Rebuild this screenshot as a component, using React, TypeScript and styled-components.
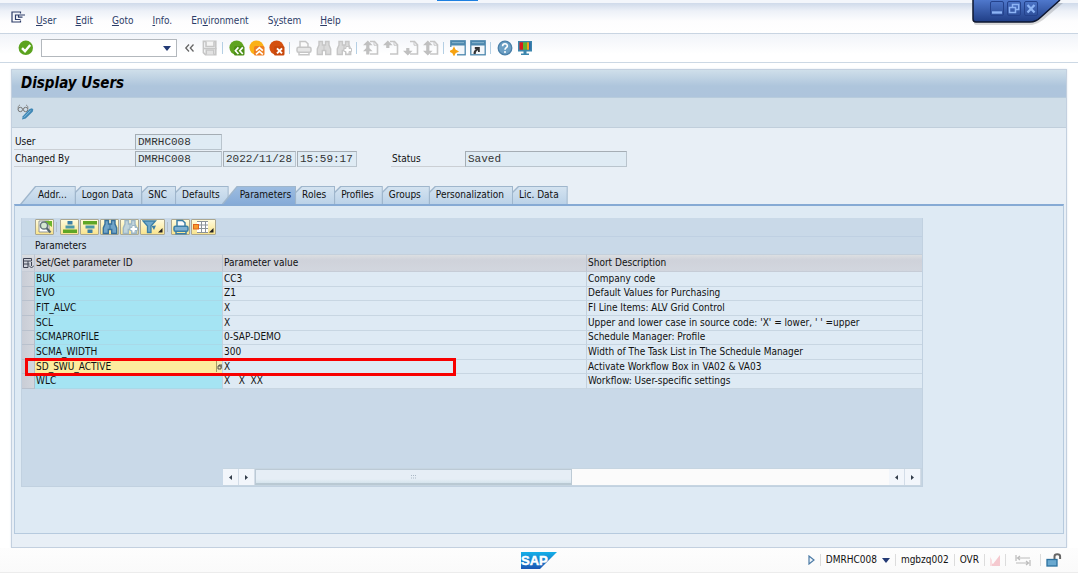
import React from "react";
import styled, { createGlobalStyle, css } from "styled-components";

const GlobalStyle = createGlobalStyle`
  * { box-sizing: border-box; }
  body { margin: 0; background: #fff; }
  body, button, input, table {
    font-family: "DejaVu Sans Condensed", "DejaVu Sans", sans-serif;
    font-size: 10px;
    line-height: 12px;
    color: #111;
  }
  button { padding: 0; border: 0; background: none; }
  svg { display: block; }
`;

const Page = styled.div`
  display: flex;
  flex-direction: column;
  min-height: 100vh;
  padding: 0 2px 2px 0;
`;

const TopStrip = styled.div`
  height: 3px;
  background: #f3f6fb;
  display: flex;
  justify-content: center;
  padding-right: 163px;
`;

const ActiveMark = styled.div`
  width: 41px;
  height: 1px;
  background: #1d7fe0;
`;

const MenuBar = styled.nav`
  display: flex;
  align-items: center;
  gap: 19px;
  height: 31px;
  padding: 6px 0 0 11px;
  background: linear-gradient(#cfdaea, #edf1f8 8px, #fdfdfe 18px, #fff);
  border-bottom: 1px solid #c9d5e2;
`;

const MenuIcon = styled.button`
  margin: 0 -9px 8px 0;
`;

const MenuItem = styled.button`
  color: #2c3c68;
  u { text-underline-offset: 1px; }
`;

const WindowTab = styled.div`
  position: absolute;
  top: 0;
  right: 16px;
  width: 92px;
  height: 27px;
`;

const WindowShape = styled.svg`
  position: absolute;
  inset: 0;
`;

const WindowButtons = styled.div`
  position: relative;
  display: flex;
  gap: 3px;
  padding: 1px 0 0 18px;
`;

const WindowButton = styled.button`
  width: 14px;
  height: 15px;
  border: 1px solid #24428c;
  border-radius: 2px;
`;

const Toolbar = styled.div`
  display: flex;
  align-items: center;
  gap: 4px;
  height: 29px;
  padding-left: 18px;
  background: linear-gradient(#f1f4f9, #fff 20px);
  border-bottom: 1px solid #ccd8e4;
`;

const ToolButton = styled.button`
  width: 16px;
  height: 16px;
`;

const Divider = styled.span`
  width: 1px;
  height: 12px;
  margin-right: 2px;
  background: #b4cfe4;
`;

const CommandBox = styled.div`
  display: flex;
  width: 136px;
  height: 18px;
  margin-left: 3px;
  border: 1px solid #b3b8bd;
  background: #fff;
  margin-right: 1px;
`;

const CommandInput = styled.input`
  flex: 1;
  min-width: 0;
  border: 0;
  padding: 0 3px;
  background: none;
  outline: 0;
`;

const CommandArrow = styled.button`
  width: 18px;
  display: grid;
  place-items: center;
`;

const Screen = styled.main`
  flex: 1;
  display: flex;
  flex-direction: column;
  margin: 6px 11px 0;
  background: #e8eff6;
  border: 1px solid #c3d0df;
  box-shadow: 0 0 2px #dfe6ef;
`;

const Title = styled.h1`
  margin: 0;
  height: 28px;
  padding-left: 9px;
  background: linear-gradient(#cfdfea, #aec5dc 16px, #aec4dc);
  border-bottom: 1px solid #b7cbdc;
  font-size: 15px;
  line-height: 27px;
  font-weight: bold;
  font-style: italic;
  color: #000;
`;

const AppToolbar = styled.div`
  height: 30px;
  padding: 6px 0 0 5px;
  background: #cfdde8;
  border-bottom: 1px solid #c0cedb;
`;

const Form = styled.div`
  display: grid;
  grid-template-columns: 120px 87px 73px 60px 32px 73px 162px;
  grid-template-rows: 16px 16px;
  row-gap: 1px;
  column-gap: 1px;
  padding: 6px 0 0 2px;
`;

const FieldLabel = styled.label<{ $column?: number }>`
  ${(p) => p.$column && css`grid-column: ${p.$column};`}
  margin-right: -1px;
  padding: 2px 0 0 1px;
  border-bottom: 1px solid #cbcfd4;
`;

const Field = styled.input`
  min-width: 0;
  height: 16px;
  padding: 0 2px;
  border: 1px solid #b9c4cd;
  border-top-color: #a5adb4;
  border-left-color: #a5adb4;
  border-radius: 0;
  background: #dfebf4;
  font-family: "Liberation Mono", monospace;
  font-size: 11px;
  line-height: 14px;
  color: #333;
  outline: 0;
`;

const Tabs = styled.div`
  display: flex;
  height: 18px;
  margin: 19px 0 0 2px;
  padding-left: 7px;
`;

const tabPadding = { plain: "0 9px 0 7px", first: "0 9px 0 18px", active: "0 5px 0 18px" };

const Tab = styled.button<{ $kind: "plain" | "first" | "active" }>`
  --slant: ${(p) => (p.$kind === "plain" ? 6 : 15)}px;
  --drop: ${(p) => (p.$kind === "plain" ? 6 : 18)}px;
  position: relative;
  isolation: isolate;
  height: 18px;
  padding: ${(p) => tabPadding[p.$kind]};
  margin-left: ${(p) => (p.$kind === "active" ? "-7px" : "-1px")};
  background: #9fb6cc;
  clip-path: polygon(var(--slant) 0, 100% 0, 100% 100%, 0 100%, 0 var(--drop));
  &::before {
    content: "";
    position: absolute;
    z-index: -1;
    inset: 1px 1px 0 1px;
    background: ${(p) => (p.$kind === "active" ? "linear-gradient(#9cbce0, #86abd8)" : "linear-gradient(#d4e3f0, #bbd2e8)")};
    clip-path: polygon(var(--slant) 0, 100% 0, 100% 100%, 0 100%, 0 var(--drop));
  }
`;

const TabPanel = styled.section`
  flex: 1;
  margin: 0 2px 13px 2px;
  padding: 12px 140px 46px 6px;
  background: #deeaf4;
  border: 1px solid #b6cade;
  border-top: 2px solid #86aad4;
`;

const Grid = styled.div`
  height: 269px;
  display: flex;
  flex-direction: column;
  background: #c9d9e8;
  border: 1px solid #c1d1e0;
  border-top: 0;
`;

const GridTools = styled.div`
  display: flex;
  align-items: center;
  gap: 1px;
  height: 19px;
  padding: 1px 0 1px 13px;
  border-bottom: 1px solid #bfd0e2;
`;

const GridTool = styled.button<{ $menu?: boolean }>`
  display: flex;
  align-items: center;
  width: ${(p) => (p.$menu ? 25 : 19)}px;
  height: 16px;
  padding-left: 1px;
  border: 1px solid #aaa68f;
  border-radius: 1px;
  background: linear-gradient(#fffbdc, #f9e48d);
`;

const GridDivider = styled.span`
  width: 1px;
  height: 10px;
  margin: 0 2px 0 1px;
  background: #b3c0cd;
`;

const GridTitle = styled.h2`
  margin: 0;
  height: 17px;
  padding: 3px 0 0 13px;
  font-size: 10px;
  line-height: 12px;
  font-weight: normal;
`;

const DataTable = styled.table`
  width: 100%;
  height: 135px;
  table-layout: fixed;
  border-collapse: separate;
  border-spacing: 0;
`;

const HeadCell = styled.th<{ $width?: number }>`
  width: ${(p) => (p.$width ? `${p.$width}px` : "auto")};
  height: 18px;
  padding: 0 0 0 1px;
  text-align: left;
  font-weight: normal;
  white-space: nowrap;
  background: linear-gradient(#dcdfe2, #cfd2da 5px, #d2d6de);
  border-right: 1px solid #bcc5d1;
  border-bottom: 1px solid #c6ccd6;
  border-top: 1px solid #c4d0dc;
  &:last-child { border-right: 0; }
`;

const Cell = styled.td<{ $kind?: "key" | "active" }>`
  padding: 0 0 0 1px;
  white-space: pre;
  background: ${(p) => (p.$kind === "key" ? "#a5e4f3" : p.$kind === "active" ? "#fdec9e" : "#deeaf4")};
  border-right: 1px solid #c3d1de;
  border-bottom: 1px solid ${(p) => (p.$kind === "key" ? "#a9d9e8" : "#c8d6e2")};
  &:last-child { border-right: 0; }
`;

const RowHandle = styled.td`
  position: relative;
  padding: 0;
  background: linear-gradient(90deg, #c9cdd6, #d3d6dd);
  border-right: 1px solid #b3bcc9;
  border-bottom: 1px solid #b9c1cd;
`;

const Highlight = styled.span`
  position: absolute;
  z-index: 1;
  top: -2px;
  left: 3px;
  width: 431px;
  height: 18px;
  border: 3px solid #f80000;
  pointer-events: none;
`;

const KeyContent = styled.div`
  display: flex;
  justify-content: space-between;
  align-items: center;
`;

const LookupButton = styled.button`
  width: 6px;
  height: 11px;
  border-left: 1px solid #a79d63;
  background: #f4e9b4;
`;

const ScrollRow = styled.div`
  display: flex;
  height: 18px;
  margin: auto 0 0 201px;
  padding: 1px 1px 1px 0;
  background: #c6d5e1;
`;

const ScrollArrow = styled.button`
  display: grid;
  place-items: center;
  width: 16px;
  background: #f2f6fb;
  border-right: 1px solid #d3dde8;
`;

const ScrollTrack = styled.div`
  flex: 1;
  background: #fbfbfb;
`;

const ScrollThumb = styled.div`
  display: grid;
  place-items: center;
  width: 50%;
  height: 16px;
  border: 1px solid #bccad5;
  border-bottom: 2px solid #b9c9d3;
  background: linear-gradient(#e6eef6 9px, #d5e4ed);
`;

const StatusBar = styled.footer`
  display: grid;
  grid-template-columns: 1fr auto 1fr;
  align-items: center;
  height: 25px;
  background: linear-gradient(#fdfdfd, #fafafa);
  border-bottom: 1px solid #ececec;
`;

const StatusItems = styled.div`
  grid-column: 3;
  display: flex;
  justify-content: flex-end;
  align-items: center;
  height: 16px;
  padding-right: 16px;
`;

const StatusItem = styled.span<{ $wide?: boolean }>`
  display: flex;
  align-items: center;
  height: 12px;
  padding: 0 ${(p) => (p.$wide ? 9 : 5)}px;
  border-right: 1px solid #dcdcdc;
  white-space: nowrap;
  &:last-child { border: 0; padding: 0 0 0 5px; }
`;

const StatusButton = styled.button`
  display: flex;
  align-items: center;
  gap: 5px;
`;

const GREY = "#c6c6c6";

const CheckIcon = () => (
  <svg width="16" height="16" viewBox="0 0 16 16">
    <circle cx="7.800" cy="7.800" r="7.200" fill="#5ba31f" />
    <path d="M4 8.200 7 11.200 12.200 5" fill="none" stroke="#fff" strokeWidth="2.400" />
  </svg>
);

const SaveIcon = () => (
  <svg width="16" height="16" viewBox="0 0 16 16" fill="none" stroke={GREY} strokeWidth="1.600">
    <path d="M1.400 1.400h12.400v13.200H3.400l-2-2z" />
    <path d="M4 1.500v5h8v-5" fill="#f4f4f4" />
    <path d="M4.200 14.500v-4.500h7.600v4.500" fill="#e2e2e2" />
    <path d="M1.500 8.500h13" />
  </svg>
);

const NavIcon = ({ kind }: { kind: "back" | "exit" | "cancel" }) => {
  const fill = { back: "#5fa31f", exit: "#fbb116", cancel: "#d4500f" }[kind];
  const edge = { back: "#4d8f17", exit: "#ee7f22", cancel: "#c9480c" }[kind];
  return (
    <svg width="16" height="16" viewBox="0 0 16 16">
      <circle cx="7.600" cy="7.600" r="7.200" fill={fill} />
      <rect x="5" y="6" width="10.500" height="9.500" rx="1.500" fill={edge} />
      {kind === "back" && <path d="m9.400 7.400-3 3.300 3 3.300M13.800 7.400l-3 3.300 3 3.300" fill="none" stroke="#fff" strokeWidth="1.700" />}
      {kind === "exit" && <path d="m7 10.600 3.400-3 3.400 3M7 14.400l3.400-3 3.400 3" fill="none" stroke="#fff" strokeWidth="1.700" />}
      {kind === "cancel" && <path d="m8 8.400 5 5M13 8.400l-5 5" stroke="#fff" strokeWidth="2" />}
    </svg>
  );
};

const PrintIcon = ({ color = GREY, fill = "#e6e6e6" }) => (
  <svg width="16" height="16" viewBox="0 0 16 16" fill="none" stroke={color} strokeWidth="1.500">
    <path d="M4 7V1.400h5.500l2.500 2.400V7" fill="#fbfbfb" />
    <rect x="1" y="7.200" width="14" height="5" rx="1.500" fill={fill} />
    <path d="M3 12.500v2.200h10v-2.200" />
  </svg>
);

const FindIcon = ({ color = GREY, inner = "#dadada", plus = false }) => (
  <svg width="16" height="16" viewBox="0 0 16 16">
    <path
      d="M3 1.500h3.500v3.500h3V1.500H13v3.500l1.700 4v5.500h-5v-4H6.300v4h-5V9L3 5z"
      fill={inner}
      stroke={color}
      strokeWidth="1.400"
    />
    <path d="M8 5v5.500" stroke={color} />
    {plus && <path d="M10 8.200V6.500h3v2h2.500v3H13v2.500h-3v-2.500H8v-3h2z" fill="#fff" stroke={color} strokeWidth="1" />}
  </svg>
);

const PageIcon = ({ kind }: { kind: "first" | "prev" | "next" | "last" }) => (
  <svg width="16" height="16" viewBox="0 0 16 16">
    <path d="M7 1.500h4.500l3 3.200V14H7" fill="none" stroke={GREY} strokeWidth="1.600" />
    <path d="M11 1.500v3.700h3.600" fill="none" stroke={GREY} />
    {kind !== "next" && <path d="M4.800.5 0 5.200h3.200V8h3.200V5.200h3.200z" fill="#c0c0c0" />}
    {kind === "first" && <path d="M4.800 6.500 0 11.200h3.200v3.300h3.200v-3.300h3.200z" fill="#c0c0c0" />}
    {(kind === "next" || kind === "last") && <path d="M4.800 15.500 0 10.800h3.200V8h3.200v2.800h3.200z" fill="#c0c0c0" />}
  </svg>
);

const SessionIcon = ({ shortcut = false }) => (
  <svg width="16" height="16" viewBox="0 0 16 16">
    <rect x=".8" y=".8" width="14.400" height="14" fill="#f4f7fa" stroke="#4c87ad" strokeWidth="1.300" />
    <path d="M1 1h14v4.500H1z" fill="#4c87ad" />
    <path d="M2 2h12v1.200H2z" fill="#7fadc9" />
    {shortcut ? (
      <path d="M3.500 14c0-3 1-4.400 3-4.800H4.800V7h5v5H8v-1.800c-1.500.4-2.100 1.500-2.300 3.800z" fill="#333" />
    ) : (
      <>
        <rect x="0" y="7" width="7" height="9" fill="#fff" />
        <path d="m4 7.800 1.200 2.400 2.400 1.200-2.400 1.200L4 15l-1.200-2.400L.4 11.400l2.400-1.200z" fill="#f6a313" stroke="#f6a313" strokeWidth="1.300" />
      </>
    )}
  </svg>
);

const HelpIcon = () => (
  <svg width="16" height="16" viewBox="0 0 16 16">
    <circle cx="8" cy="8" r="6.800" fill="#6c9fc4" stroke="#4a7fa8" strokeWidth="1.300" />
    <path d="M5.600 6.200C5.600 3 10.400 3 10.400 6c0 1.700-2.400 1.800-2.400 3.800" fill="none" stroke="#fff" strokeWidth="1.600" />
    <circle cx="8" cy="12" r="1" fill="#fff" />
  </svg>
);

const MonitorIcon = () => (
  <svg width="16" height="16" viewBox="0 0 16 16">
    <rect x="1" y="1" width="14" height="10.500" fill="#3c86ad" />
    <path d="M2.500 2.300H6v7.400H2.500z" fill="#d91a1a" />
    <path d="M6 2.300h4v7.400H6z" fill="#61b12c" />
    <path d="M10 2.300h3.500v7.400H10z" fill="#2a5fa8" />
    <path d="M10 2.300h2v7.400h-2z" fill="#f4a01b" />
    <path d="M6.500 11h3v2.400H12V15H4v-1.600h2.500z" fill="#3c86ad" />
  </svg>
);

const GlassesPencilIcon = () => (
  <svg width="17" height="16" viewBox="0 0 17 16">
    <circle cx="3.300" cy="5.500" r="2.200" fill="none" stroke="#777" />
    <circle cx="8.600" cy="5.500" r="2.200" fill="none" stroke="#777" />
    <path d="M1.200 5.500V2.500L3 .8M10.800 5V2.500L9 .8M5.400 5h1.200" fill="none" stroke="#888" />
    <path d="m5 15.500.8-3.300L12.600 5l2.400-.8 1.300 1.300-.6 2.300-7 6.700z" fill="#3f87b5" />
    <path d="m6.800 13.500 6.900-7" stroke="#8cc0df" strokeWidth="1" />
  </svg>
);

const MenuMarker = () => (
  <svg width="5" height="12" viewBox="0 0 5 12">
    <path d="M4.500 7v4.500H0z" fill="#222" />
  </svg>
);

const DetailIcon = () => (
  <svg width="16" height="14" viewBox="0 0 16 14">
    <path d="M2 1h10v11H2z" fill="#fff" stroke="#8d9498" />
    <path d="M7 1h8v6l-3-2z" fill="#6eb52c" />
    <circle cx="7" cy="5.500" r="3.600" fill="#d5e8d0" stroke="#66777c" strokeWidth="1.500" />
    <path d="m9.500 8 4 4.500" stroke="#55676e" strokeWidth="2.200" />
  </svg>
);

const SortIcon = ({ down = false }) => (
  <svg width="16" height="14" viewBox="0 0 16 14">
    {down ? (
      <>
        <path d="M1 1h14v3.500H1z" fill="#5fa625" />
        <path d="M3.500 5.500h9v3h-9z" fill="#4c98a8" />
        <path d="M5.500 9.500h5V13h-5z" fill="#3c7fa6" />
      </>
    ) : (
      <>
        <path d="M5.500 1h5v3.500h-5z" fill="#3c7fa6" />
        <path d="M3.500 5.500h9v3h-9z" fill="#4c98a8" />
        <path d="M1 9.500h14V13H1z" fill="#5fa625" />
      </>
    )}
  </svg>
);

const FilterIcon = () => (
  <svg width="16" height="14" viewBox="0 0 16 14">
    <path d="M1 1h12.500L9 6v6.500H5.500V6z" fill="#6fa8cc" stroke="#3c7fa6" strokeWidth="1.300" />
    <path d="m9.500 6 4.500-.5-2 4.500z" fill="#3c7fa6" />
  </svg>
);

const LayoutIcon = () => (
  <svg width="16" height="14" viewBox="0 0 16 14">
    <path d="M4 1.500h11v11H4z" fill="#fff" />
    <path d="M4 1.500h11M4 5h11M4 8.500h11M4 12.500h11M8.500 1v12M12.500 1v12" stroke="#8b9398" />
    <rect x=".5" y="4.500" width="5" height="4.500" fill="#f59a2c" stroke="#e0611c" />
  </svg>
);

const SelectAllIcon = () => (
  <svg width="11" height="12" viewBox="0 0 11 12" fill="none" stroke="#3d4252">
    <path d="M.5 1.500h8v2.500h-8zM.5 4v6.500h4.500M.5 7h6M5 4v6.500" />
    <path d="M8.500 5v4M6 8.500l2.500 2.500L11 8.500" />
  </svg>
);

const SapLogo = () => (
  <svg width="36" height="17" viewBox="0 0 36 17" role="img" aria-label="SAP">
    <defs>
      <linearGradient id="sap" x1="0" y1="0" x2="0" y2="1">
        <stop offset="0" stopColor="#14afe8" />
        <stop offset="1" stopColor="#1b56b4" />
      </linearGradient>
    </defs>
    <path d="M0 0h36L19 17H0z" fill="url(#sap)" />
    <text x="0" y="13" fontFamily="Liberation Sans, sans-serif" fontWeight="bold" fontSize="13" fill="#fff" stroke="#fff" strokeWidth=".5">
      SAP
    </text>
  </svg>
);

const Arrow = ({ left = false }) => (
  <svg width="3" height="5" viewBox="0 0 3 5">
    <path d={left ? "M3 0v5L0 2.500z" : "M0 0v5l3-2.500z"} fill="#333d4a" />
  </svg>
);

const DropArrow = () => (
  <svg width="8" height="5" viewBox="0 0 8 5">
    <path d="M0 0h8L4 5z" fill="#233a75" />
  </svg>
);

const menus: [string, string, string][] = [
  ["", "U", "ser"],
  ["", "E", "dit"],
  ["", "G", "oto"],
  ["", "I", "nfo."],
  ["En", "v", "ironment"],
  ["S", "y", "stem"],
  ["", "H", "elp"],
];

const tabs = ["Addr...", "Logon Data", "SNC", "Defaults", "Parameters", "Roles", "Profiles", "Groups", "Personalization", "Lic. Data"];

const rows = [
  ["BUK", "CC3", "Company code"],
  ["EVO", "Z1", "Default Values for Purchasing"],
  ["FIT_ALVC", "X", "FI Line Items: ALV Grid Control"],
  ["SCL", "X", "Upper and lower case in source code: 'X' = lower, ' ' =upper"],
  ["SCMAPROFILE", "0-SAP-DEMO", "Schedule Manager: Profile"],
  ["SCMA_WIDTH", "300", "Width of The Task List in The Schedule Manager"],
  ["SD_SWU_ACTIVE", "X", "Activate Workflow Box in VA02 & VA03"],
  ["WLC", "X   X  XX", "Workflow: User-specific settings"],
];

const activeRow = "SD_SWU_ACTIVE";

export default function App() {
  return (
    <Page>
      <GlobalStyle />
      <TopStrip>
        <ActiveMark />
      </TopStrip>
      <MenuBar>
        <MenuIcon aria-label="Menu">
          <svg width="15" height="12" viewBox="0 0 15 12" fill="none" stroke="#2c3c68" strokeWidth="1.200">
            <path d="M9.500 2.500V1H1v10h8.500V9.500" />
            <path d="M14 4H4.500v4.500h5M7.500 4v2.200h4" />
          </svg>
        </MenuIcon>
        {menus.map(([before, key, after]) => (
          <MenuItem key={key + after}>
            {before}
            <u>{key}</u>
            {after}
          </MenuItem>
        ))}
      </MenuBar>
      <WindowTab>
        <WindowShape width="92" height="27" viewBox="0 0 92 27">
          <defs>
            <linearGradient id="tab" x1="0" y1="0" x2="0" y2="1">
              <stop offset="0" stopColor="#4f78cc" />
              <stop offset="1" stopColor="#1f3d85" />
            </linearGradient>
          </defs>
          <path d="M2 3v20q0 2 3 2h55q6-1 11-5L91 3z" fill="#000" opacity=".15" />
          <path d="M1 0v19q0 3 3 3h54q6 0 11-5L88 0z" fill="url(#tab)" />
          <path d="M1 0v19q0 3 3 3h54q6 0 11-5L88 0" fill="none" stroke="#0e1730" strokeWidth="1.500" />
        </WindowShape>
        <WindowButtons>
          <WindowButton aria-label="Minimize">
            <svg width="12" height="13" viewBox="0 0 12 13"><path d="M1 10.500h10" stroke="#8db4f5" strokeWidth="2.400" /></svg>
          </WindowButton>
          <WindowButton aria-label="Restore">
            <svg width="12" height="13" viewBox="0 0 12 13" fill="none" stroke="#8db4f5" strokeWidth="1.500">
              <path d="M4.500 5V2.500h6.200v5H8" /><path d="M1.500 5.500h6v5h-6z" />
            </svg>
          </WindowButton>
          <WindowButton aria-label="Close">
            <svg width="12" height="13" viewBox="0 0 12 13"><path d="m2.500 3 7 7.500M9.500 3l-7 7.500" stroke="#8db4f5" strokeWidth="2.300" /></svg>
          </WindowButton>
        </WindowButtons>
      </WindowTab>
      <Toolbar>
        <ToolButton aria-label="Enter"><CheckIcon /></ToolButton>
        <CommandBox>
          <CommandInput aria-label="Command" />
          <CommandArrow aria-label="Command history"><DropArrow /></CommandArrow>
        </CommandBox>
        <ToolButton aria-label="Collapse">
          <svg width="16" height="16" viewBox="0 0 16 16">
            <path d="M7 4.500 3.800 8 7 11.500M11.500 4.500 8.300 8l3.200 3.500" fill="none" stroke="#666" strokeWidth="1.300" />
          </svg>
        </ToolButton>
        <ToolButton aria-label="Save"><SaveIcon /></ToolButton>
        <Divider />
        <ToolButton aria-label="Back"><NavIcon kind="back" /></ToolButton>
        <ToolButton aria-label="Exit"><NavIcon kind="exit" /></ToolButton>
        <ToolButton aria-label="Cancel"><NavIcon kind="cancel" /></ToolButton>
        <Divider />
        <ToolButton aria-label="Print"><PrintIcon /></ToolButton>
        <ToolButton aria-label="Find"><FindIcon /></ToolButton>
        <ToolButton aria-label="Find next"><FindIcon plus /></ToolButton>
        <Divider />
        <ToolButton aria-label="First page"><PageIcon kind="first" /></ToolButton>
        <ToolButton aria-label="Previous page"><PageIcon kind="prev" /></ToolButton>
        <ToolButton aria-label="Next page"><PageIcon kind="next" /></ToolButton>
        <ToolButton aria-label="Last page"><PageIcon kind="last" /></ToolButton>
        <Divider />
        <ToolButton aria-label="New session"><SessionIcon /></ToolButton>
        <ToolButton aria-label="Create shortcut"><SessionIcon shortcut /></ToolButton>
        <Divider />
        <ToolButton aria-label="Help"><HelpIcon /></ToolButton>
        <ToolButton aria-label="Customize layout"><MonitorIcon /></ToolButton>
      </Toolbar>
      <Screen>
        <Title>Display Users</Title>
        <AppToolbar>
          <ToolButton aria-label="Display or change"><GlassesPencilIcon /></ToolButton>
        </AppToolbar>
        <Form>
          <FieldLabel htmlFor="user" $column={1}>User</FieldLabel>
          <Field id="user" readOnly value="DMRHC008" />
          <FieldLabel htmlFor="changed" $column={1}>Changed By</FieldLabel>
          <Field id="changed" readOnly value="DMRHC008" />
          <Field aria-label="Change date" readOnly value="2022/11/28" />
          <Field aria-label="Change time" readOnly value="15:59:17" />
          <FieldLabel htmlFor="status" $column={6}>Status</FieldLabel>
          <Field id="status" readOnly value="Saved" />
        </Form>
        <Tabs role="tablist">
          {tabs.map((name, i) => {
            const active = name === "Parameters";
            return (
              <Tab key={name} role="tab" aria-selected={active} $kind={active ? "active" : i === 0 ? "first" : "plain"}>
                {name}
              </Tab>
            );
          })}
        </Tabs>
        <TabPanel role="tabpanel">
          <Grid>
            <GridTools>
              <GridTool aria-label="Details"><DetailIcon /></GridTool>
              <GridDivider />
              <GridTool aria-label="Sort ascending"><SortIcon /></GridTool>
              <GridTool aria-label="Sort descending"><SortIcon down /></GridTool>
              <GridTool aria-label="Find"><FindIcon color="#38719b" inner="#6fa4c9" /></GridTool>
              <GridTool aria-label="Find next"><FindIcon color="#9db6c4" inner="#c0d4dc" plus /></GridTool>
              <GridTool aria-label="Filter" $menu><FilterIcon /><MenuMarker /></GridTool>
              <GridDivider />
              <GridTool aria-label="Print"><PrintIcon color="#3c7fa6" fill="#7fb0d2" /></GridTool>
              <GridTool aria-label="Layout" $menu><LayoutIcon /><MenuMarker /></GridTool>
            </GridTools>
            <GridTitle>Parameters</GridTitle>
            <DataTable>
              <thead>
                <tr>
                  <HeadCell $width={13}><SelectAllIcon /></HeadCell>
                  <HeadCell $width={188}>Set/Get parameter ID</HeadCell>
                  <HeadCell $width={364}>Parameter value</HeadCell>
                  <HeadCell>Short Description</HeadCell>
                </tr>
              </thead>
              <tbody>
                {rows.map(([id, value, text]) => {
                  const active = id === activeRow;
                  return (
                    <tr key={id}>
                      <RowHandle>{active && <Highlight />}</RowHandle>
                      <Cell $kind={active ? "active" : "key"}>
                        {active ? (
                          <KeyContent>
                            {id}
                            <LookupButton aria-label="Look up value">
                              <svg width="5" height="9" viewBox="0 0 5 9"><path d="M1 4h3v3H1zM2 4V3h3v3" fill="none" stroke="#444" strokeWidth=".9" /></svg>
                            </LookupButton>
                          </KeyContent>
                        ) : (
                          id
                        )}
                      </Cell>
                      <Cell>{value}</Cell>
                      <Cell>{text}</Cell>
                    </tr>
                  );
                })}
              </tbody>
            </DataTable>
            <ScrollRow>
              <ScrollArrow aria-label="Scroll left"><Arrow left /></ScrollArrow>
              <ScrollArrow aria-label="Scroll right"><Arrow /></ScrollArrow>
              <ScrollTrack>
                <ScrollThumb>
                  <svg width="6" height="4" viewBox="0 0 6 4"><path d="M0 .5h6M0 3h6" stroke="#a9b7c4" strokeDasharray="1 1" /></svg>
                </ScrollThumb>
              </ScrollTrack>
              <ScrollArrow aria-label="Scroll to start"><Arrow left /></ScrollArrow>
              <ScrollArrow aria-label="Scroll to end"><Arrow /></ScrollArrow>
            </ScrollRow>
          </Grid>
        </TabPanel>
      </Screen>
      <StatusBar>
        <span />
        <SapLogo />
        <StatusItems>
          <StatusItem>
            <svg width="7" height="10" viewBox="0 0 7 10"><path d="M1 1v8l5-4z" fill="#eef4fa" stroke="#4c7ba6" strokeWidth="1.200" /></svg>
          </StatusItem>
          <StatusItem>
            <StatusButton>DMRHC008<DropArrow /></StatusButton>
          </StatusItem>
          <StatusItem>mgbzq002</StatusItem>
          <StatusItem>OVR</StatusItem>
          <StatusItem>
            <svg width="10" height="11" viewBox="0 0 10 11"><path d="M10 0v11H0V7l3 2z" fill="#f5c9cf" /><path d="M0 11V2l2 3v6z" fill="#f9dde0" /></svg>
          </StatusItem>
          <StatusItem $wide>
            <svg width="16" height="11" viewBox="0 0 16 11" fill="none" stroke="#bbb" strokeWidth="1.200">
              <path d="M1 0v6M15 3H2.500M5 1 2.500 3 5 5M15 5v6M1 8h12.500M11 6l2.500 2L11 10" />
            </svg>
          </StatusItem>
          <StatusItem>
            <svg width="16" height="14" viewBox="0 0 16 14">
              <path d="M8.500 6V3.500a2.800 2.300 0 0 1 5.600 0V6" fill="none" stroke="#666" strokeWidth="2" />
              <rect x="1" y="6.500" width="10" height="6.500" fill="#6aa9d0" stroke="#2c719f" strokeWidth="1.300" />
            </svg>
          </StatusItem>
        </StatusItems>
      </StatusBar>
    </Page>
  );
}
